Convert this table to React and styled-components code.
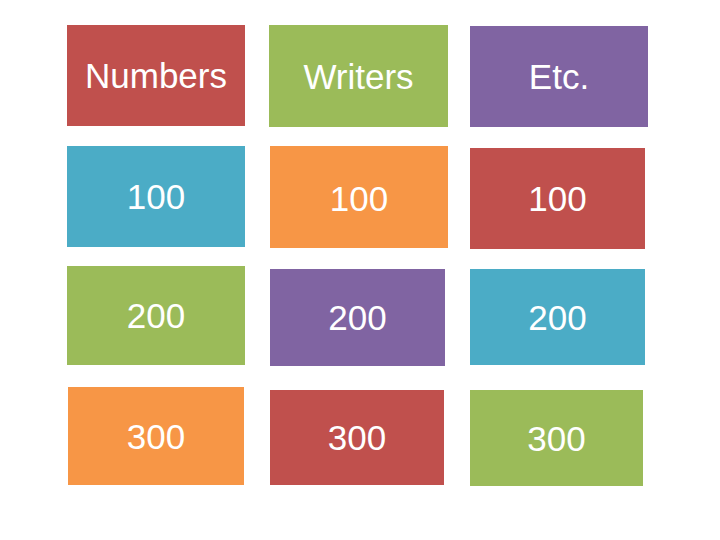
import React from "react";
import styled, { createGlobalStyle } from "styled-components";

const Global = createGlobalStyle`
  html, body { margin: 0; padding: 0; background: #ffffff; }
  body { width: 720px; height: 540px; overflow: hidden; font-family: "Liberation Sans", Arial, sans-serif; }
`;

const COLORS = {
  red: "#C0504D",
  green: "#9BBB59",
  purple: "#8064A2",
  blue: "#4BACC6",
  orange: "#F79646",
};

const Board = styled.main`
  display: grid;
  grid-template-columns: 202px 201px 178px;
  grid-template-rows: 121px 120px 121px 100px;
  padding: 24px 0 0 67px;
  width: 720px;
  height: 540px;
  box-sizing: border-box;
`;

const Cell = styled.div`
  display: flex;
  align-items: flex-start;
  justify-content: flex-start;
`;

const Tile = styled.div`
  display: flex;
  align-items: center;
  justify-content: center;
  box-sizing: border-box;
  background: ${(p) => COLORS[p.$color]};
  width: ${(p) => p.$w}px;
  height: ${(p) => p.$h}px;
  margin-left: ${(p) => p.$dx || 0}px;
  margin-top: ${(p) => p.$dy || 0}px;
  color: #ffffff;
  font-family: "Liberation Sans", Arial, sans-serif;
  font-size: 35px;
  line-height: 1;
  padding-top: ${(p) => p.$ty || 0}px;
`;

const tiles = [
  // row 1
  { label: "Numbers", color: "red", w: 178, h: 101, dx: 0, dy: 1 },
  { label: "Writers", color: "green", w: 179, h: 102, dx: 0, dy: 1 },
  { label: "Etc.", color: "purple", w: 178, h: 101, dx: 0, dy: 2 },
  // row 2
  { label: "100", color: "blue", w: 178, h: 101, dx: 0, dy: 1 },
  { label: "100", color: "orange", w: 178, h: 102, dx: 1, dy: 1, ty: 2 },
  { label: "100", color: "red", w: 175, h: 101, dx: 0, dy: 3 },
  // row 3
  { label: "200", color: "green", w: 178, h: 99, dx: 0, dy: 1 },
  { label: "200", color: "purple", w: 175, h: 97, dx: 1, dy: 4 },
  { label: "200", color: "blue", w: 175, h: 96, dx: 0, dy: 4, ty: -4 },
  // row 4
  { label: "300", color: "orange", w: 176, h: 98, dx: 1, dy: 1 },
  { label: "300", color: "red", w: 174, h: 95, dx: 1, dy: 4 },
  { label: "300", color: "green", w: 173, h: 96, dx: 0, dy: 4 },
];

export default function App() {
  return (
    <>
      <Global />
      <Board>
        {tiles.map((t, i) => (
          <Cell key={i}>
            <Tile $color={t.color} $w={t.w} $h={t.h} $dx={t.dx} $dy={t.dy} $ty={t.ty}>
              {t.label}
            </Tile>
          </Cell>
        ))}
      </Board>
    </>
  );
}
